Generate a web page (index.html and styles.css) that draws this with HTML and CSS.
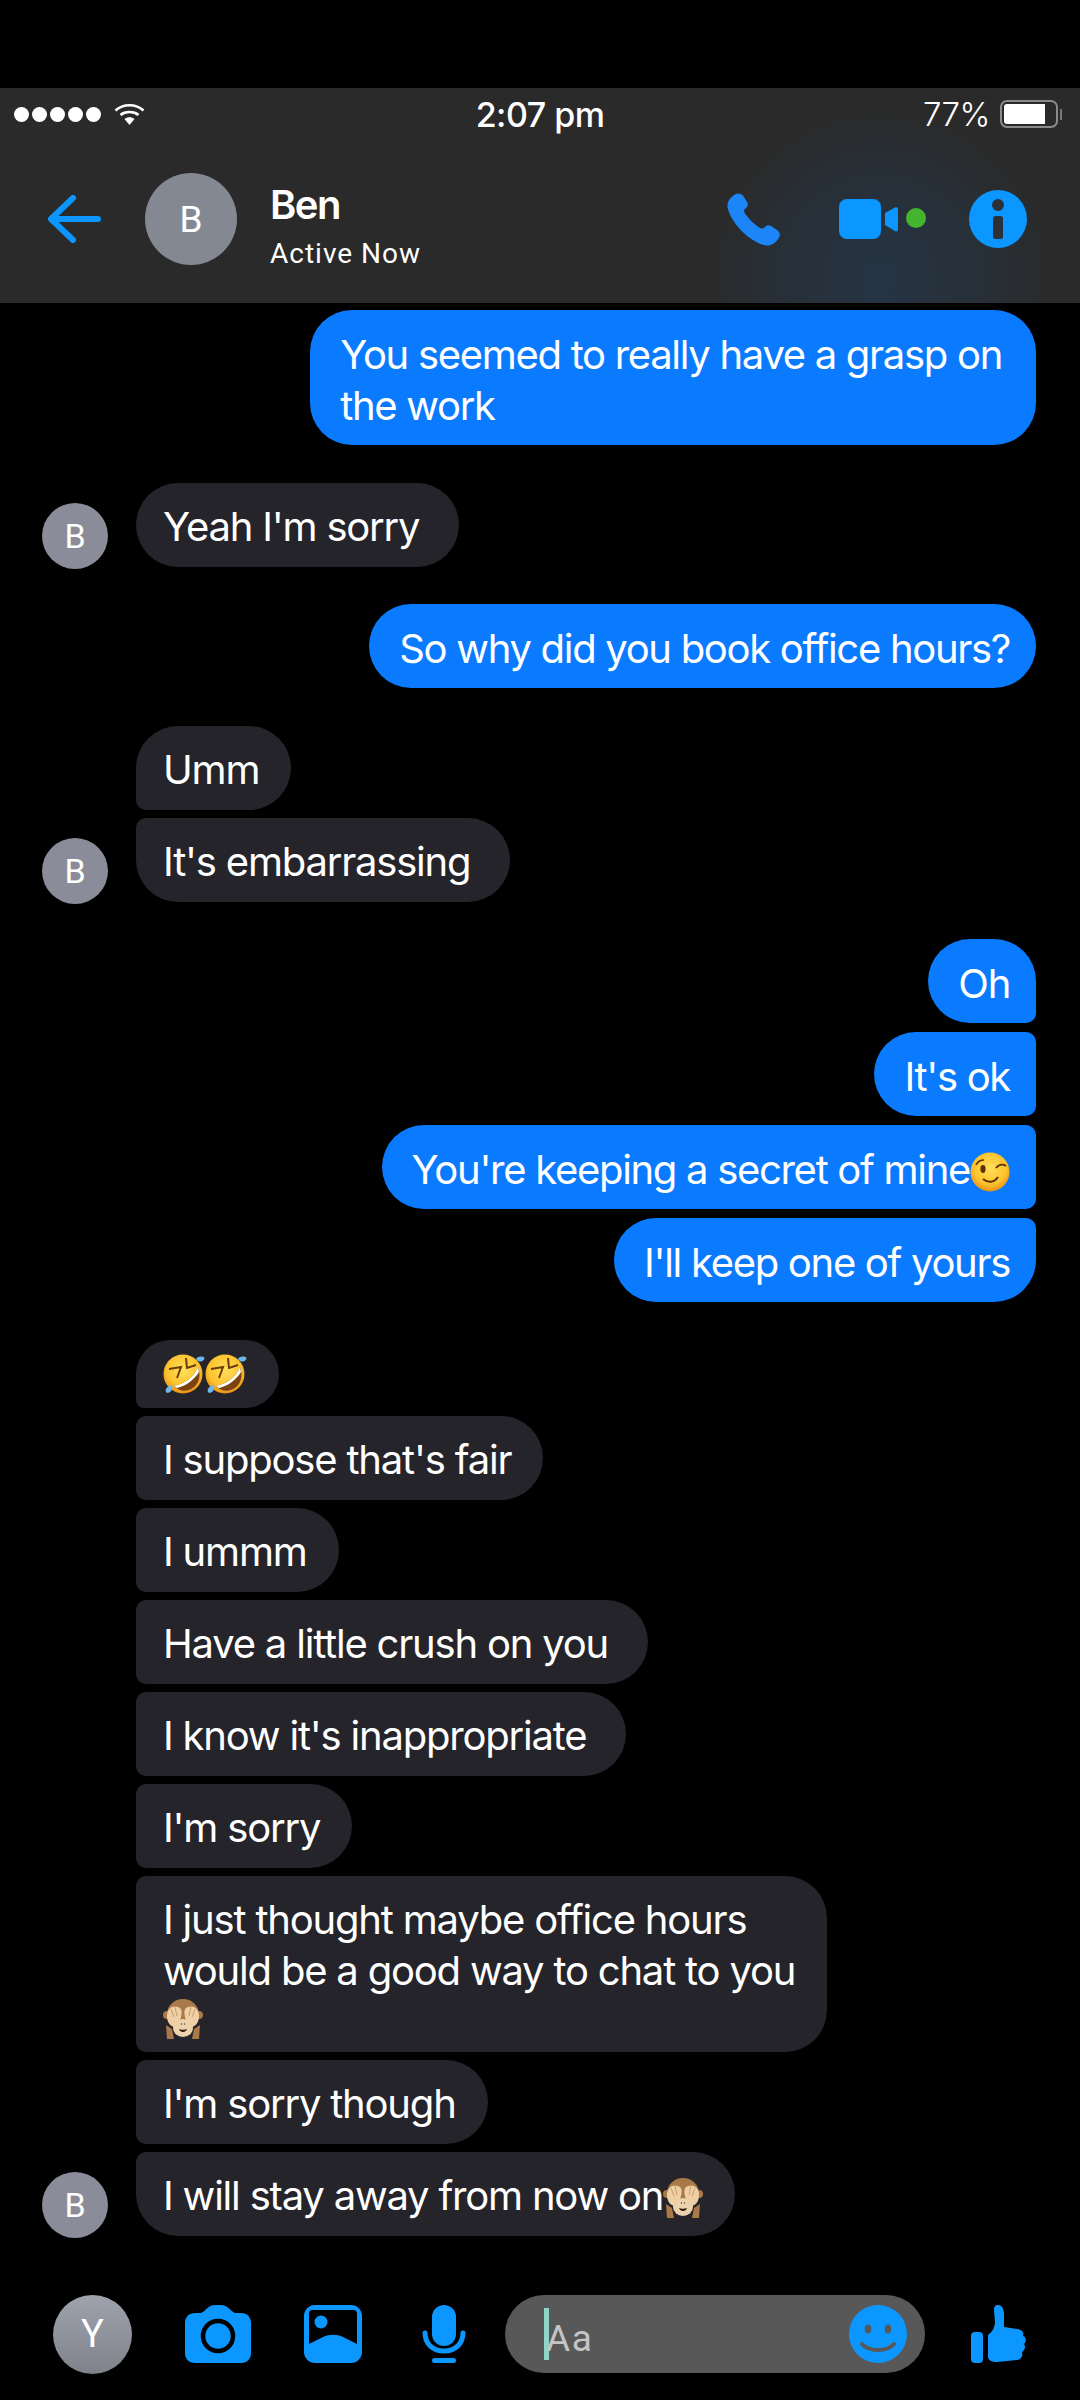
FILE: index.html
```html
<!DOCTYPE html>
<html lang="en">
<head>
    <meta charset="UTF-8">
    <meta name="viewport" content="width=device-width, initial-scale=1.0">
    <title>Ben</title>
    <link rel="stylesheet" href="styles.css">
</head>
<body>
    <!-- Emoji drawings, used from the messages below -->
    <svg class="defs" width="0" height="0">
        <defs>
            <radialGradient id="face" cx="50%" cy="40%" r="60%">
                <stop offset="0" stop-color="#ffe05a"/>
                <stop offset="0.7" stop-color="#fcc22d"/>
                <stop offset="1" stop-color="#e8901a"/>
            </radialGradient>
            <symbol id="rofl" viewBox="0 0 42 42">
                <circle cx="20" cy="21" r="19.5" fill="url(#face)"/>
                <path d="M6 16 L18 14 L14 25" fill="none" stroke="#6b3d0c" stroke-width="2"/>
                <path d="M23 5 L24 15 L33 12" fill="none" stroke="#6b3d0c" stroke-width="2"/>
                <path d="M11 33 C22 31 31 24 35 14 C39 24 35 34 26 37 C20 39 15 37 11 33 Z" fill="#7a430f"/>
                <path d="M11 33 C22 31 31 24 35 14 L36 19 C31 27 23 33 14 35 Z" fill="#fff"/>
                <path d="M33 6 C35 3 40 3 41.500 5 C41 9 36 10 33 6 Z" fill="#6fb6ea"/>
                <path d="M9 32 C10 36 8 40 4 40 C1 38 3 33 9 32 Z" fill="#6fb6ea"/>
            </symbol>
            <symbol id="wink" viewBox="0 0 40 40">
                <circle cx="20" cy="20" r="19.5" fill="url(#face)"/>
                <path d="M6 13 C8 9 11 8 14 8" fill="none" stroke="#5b3208" stroke-width="1.600"/>
                <path d="M26 16 C29 12 33 12 36 14" fill="none" stroke="#5b3208" stroke-width="2"/>
                <ellipse cx="13" cy="17" rx="2.600" ry="4" fill="#5b3208"/>
                <path d="M13 27 C18 31 24 31 28 25" fill="none" stroke="#5b3208" stroke-width="2"/>
            </symbol>
            <symbol id="monkey" viewBox="0 0 40 40">
                <circle cx="4" cy="16" r="4" fill="#a9794a"/>
                <circle cx="36" cy="16" r="4" fill="#a9794a"/>
                <ellipse cx="20" cy="15" rx="16" ry="15" fill="#a9794a"/>
                <ellipse cx="20" cy="29" rx="10" ry="9" fill="#ecd3ae"/>
                <path d="M4 40 L3 26 L9 30 L11 40 Z" fill="#a9794a"/>
                <path d="M36 40 L37 26 L31 30 L29 40 Z" fill="#a9794a"/>
                <path d="M4 17 C4 8 12 5 18 10 C20 15 17 24 12 28 C8 28 4 24 4 17 Z" fill="#efcfa5"/>
                <path d="M36 17 C36 8 28 5 22 10 C20 15 23 24 28 28 C32 28 36 24 36 17 Z" fill="#efcfa5"/>
                <path d="M8 10 L11 18 M12 8 L14 17 M32 10 L29 18 M28 8 L26 17" stroke="#c99d70" stroke-width="1"/>
                <circle cx="18.500" cy="25" r="0.700" fill="#5b3a1c"/>
                <circle cx="21.500" cy="25" r="0.700" fill="#5b3a1c"/>
                <path d="M16 30 C18 31 22 31 24 30 C23 34 17 34 16 30 Z" fill="#2e1a0a"/>
            </symbol>
        </defs>
    </svg>

    <div class="phone">
        <header class="topbar">
            <div class="status">
                <div class="signal">
                    <span></span><span></span><span></span><span></span><span></span>
                    <svg class="wifi" viewBox="0 0 31 22">
                        <path d="M1.500 7.500 C9 0.500 22 0.500 29.500 7.500" fill="none" stroke="#fff" stroke-width="2.600"/>
                        <path d="M6.500 12 C11 8 20 8 24.500 12" fill="none" stroke="#fff" stroke-width="2.600"/>
                        <path d="M10.500 16 L15.500 22 L20.500 16 C17.500 13.500 13.500 13.500 10.500 16 Z" fill="#fff"/>
                    </svg>
                </div>
                <div class="clock">2:07 pm</div>
                <div class="power">
                    <span>77%</span>
                    <div class="battery"><div class="battery-fill"></div></div>
                    <div class="battery-tip"></div>
                </div>
            </div>
            <div class="nav">
                <svg class="back" viewBox="0 0 53 48">
                    <path d="M25 3 L3 24 L25 45 M3 24 L50 24" fill="none" stroke="#0b97ff" stroke-width="6" stroke-linecap="round" stroke-linejoin="round"/>
                </svg>
                <div class="avatar avatar-big">B</div>
                <div class="who">
                    <div class="name">Ben</div>
                    <div class="active">Active Now</div>
                </div>
                <svg class="phone-icon" viewBox="0 0 53 53">
                    <path d="M9 1 C12 -0.500 15 1 17 4 L20 9 C21.500 11.500 21 13 19 15 C17 16.500 16.500 18 18 20.500 C21 25 27 31 32 34.500 C34.500 36 36 36 38 34 C40 32 41.500 31.500 44 33 L50 37 C53 39 53.500 42 52 44.500 C49 50 44 53 39 52.500 C24 50 4 31 0.500 14 C0 9 3 4 9 1 Z" fill="#1c86f8"/>
                </svg>
                <svg class="video-icon" viewBox="0 0 88 40">
                    <rect x="0" y="0" width="42" height="40" rx="8" fill="#0b97ff"/>
                    <path d="M46 14 L56 8.500 C58 8 59 9 59 10 L59 30 C59 32 58 33 56 32 L46 26 Z" fill="#0b97ff"/>
                    <circle cx="77" cy="19" r="10" fill="#45b52f"/>
                </svg>
                <svg class="info-icon" viewBox="0 0 58 58">
                    <circle cx="29" cy="29" r="29" fill="#0b97ff"/>
                    <circle cx="29" cy="15" r="6" fill="#2a3038"/>
                    <rect x="24" y="26" width="10" height="23" rx="2.500" fill="#2a3038"/>
                </svg>
            </div>
        </header>

        <!-- Messages -->
        <main class="messages">
            <div class="group sent">
                <div class="bubble wrapped">You seemed to really have a grasp on<br>the work</div>
            </div>

            <div class="group received">
                <div class="avatar">B</div>
                <div class="stack">
                    <div class="bubble wide">Yeah I'm sorry</div>
                </div>
            </div>

            <div class="group sent">
                <div class="bubble">So why did you book office hours?</div>
            </div>

            <div class="group received">
                <div class="avatar">B</div>
                <div class="stack">
                    <div class="bubble">Umm</div>
                    <div class="bubble wide">It's embarrassing</div>
                </div>
            </div>

            <div class="group sent">
                <div class="bubble">Oh</div>
                <div class="bubble">It's ok</div>
                <div class="bubble">You're keeping a secret of mine<svg class="emoji"><use href="#wink"/></svg></div>
                <div class="bubble">I'll keep one of yours</div>
            </div>

            <div class="group received">
                <div class="avatar">B</div>
                <div class="stack">
                    <div class="bubble bubble-emoji"><svg class="emoji"><use href="#rofl"/></svg><svg class="emoji"><use href="#rofl"/></svg></div>
                    <div class="bubble">I suppose that's fair</div>
                    <div class="bubble">I ummm</div>
                    <div class="bubble wide">Have a little crush on you</div>
                    <div class="bubble wide">I know it's inappropriate</div>
                    <div class="bubble">I'm sorry</div>
                    <div class="bubble">I just thought maybe office hours<br>would be a good way to chat to you<span class="emoji-line"><svg class="emoji"><use href="#monkey"/></svg></span></div>
                    <div class="bubble">I'm sorry though</div>
                    <div class="bubble">I will stay away from now on<svg class="emoji"><use href="#monkey"/></svg></div>
                </div>
            </div>
        </main>

        <!-- Composer -->
        <footer class="composer">
            <div class="avatar avatar-me">Y</div>
            <svg class="camera" viewBox="0 0 66 58">
                <path d="M10 8 L16 8 C21 6 23 0 30 0 L36 0 C43 0 45 6 50 8 L56 8 C62 8 66 12 66 18 L66 48 C66 54 62 58 56 58 L10 58 C4 58 0 54 0 48 L0 18 C0 12 4 8 10 8 Z" fill="#0b97ff"/>
                <circle cx="33" cy="31" r="15" fill="#0b97ff" stroke="#000" stroke-width="4.500"/>
            </svg>
            <svg class="photo" viewBox="0 0 58 58">
                <rect width="58" height="58" rx="11" fill="#0b97ff"/>
                <path d="M9 5 L49 5 C52 5 53 6 53 9 L53 39 L39 32 C33 29 25 29 19 32 L5 39 L5 9 C5 6 6 5 9 5 Z" fill="#000"/>
                <circle cx="17" cy="17" r="6.500" fill="#0b97ff"/>
            </svg>
            <svg class="mic" viewBox="0 0 44 58">
                <rect x="10" y="0" width="24" height="41" rx="12" fill="#0b97ff"/>
                <path d="M3 28 C3 39 11 46 22 46 C33 46 41 39 41 28" fill="none" stroke="#0b97ff" stroke-width="5" stroke-linecap="round"/>
                <rect x="10" y="53" width="24" height="5" rx="2.500" fill="#0b97ff"/>
            </svg>
            <div class="input">
                <span class="caret"></span>
                <span class="placeholder">Aa</span>
                <svg class="smile" viewBox="0 0 58 58">
                    <ellipse cx="29" cy="29" rx="29" ry="29" fill="#0b97ff"/>
                    <ellipse cx="19" cy="24" rx="3.300" ry="4.500" fill="#585858"/>
                    <ellipse cx="39" cy="24" rx="3.300" ry="4.500" fill="#585858"/>
                    <path d="M13 39 C20 47 38 47 45 39" fill="none" stroke="#585858" stroke-width="4" stroke-linecap="round"/>
                </svg>
            </div>
            <svg class="thumb" viewBox="0 0 56 58">
                <rect x="0" y="27" width="12" height="31" rx="4" fill="#0b97ff"/>
                <path d="M27 0 C31 0 33 4 33 10 L33 22 L46 24 C52 25 53 28 52 31 C55 32 56 36 53 39 C55 41 54 45 51 47 C52 50 51 54 46 55 L26 57 C21 57 17 55 17 52 L17 30 C21 27 23 24 24 18 L23 5 C23 2 24 0 27 0 Z" fill="#0b97ff"/>
            </svg>
        </footer>
    </div>
</body>
</html>
```

FILE: styles.css
```css
body {
    margin: 0;
    padding: 0;
    background: #000;
    color: #fff;
    font-family: Inter, "Liberation Sans", sans-serif;
}

.defs {
    display: block;
    height: 0;
}

.phone {
    height: 2400px;
    padding-top: 88px;
    box-sizing: border-box;
    display: flex;
    flex-direction: column;
    overflow: hidden;
}

/* Top bar */
.topbar {
    height: 215px;
    flex: none;
    background: radial-gradient(ellipse 170px 170px at 880px 190px, #263444 0%, #273039 55%, rgba(42, 42, 42, 0) 100%), #2a2a2a;
}

.status {
    height: 52px;
    padding: 0 18px 0 14px;
    display: grid;
    grid-template-columns: 1fr auto 1fr;
    align-items: center;
}

.signal {
    display: flex;
    align-items: center;
    gap: 3px;
}

.signal span {
    width: 15px;
    height: 15px;
    background: #fff;
    border-radius: 50%;
}

.wifi {
    width: 31px;
    height: 22px;
    margin-left: 10px;
}

.clock {
    margin-left: 4px;
    font-size: 34px;
    font-weight: 500;
    letter-spacing: -0.5px;
}

.power {
    display: flex;
    align-items: center;
    justify-content: flex-end;
    font-size: 33px;
    font-weight: 300;
    letter-spacing: -0.5px;
}

.power span {
    margin-right: 10px;
}

.battery {
    width: 58px;
    height: 28px;
    box-sizing: border-box;
    border: 2px solid #8a8a8a;
    border-radius: 7px;
    padding: 2px;
}

.battery-fill {
    width: 41px;
    height: 100%;
    background: #fff;
    border-radius: 3px 0 0 3px;
}

.battery-tip {
    width: 2px;
    height: 11px;
    margin-left: 2px;
    background: #777;
}

.nav {
    height: 158px;
    padding-left: 48px;
    display: flex;
    align-items: center;
}

.back {
    width: 53px;
    height: 48px;
}

.avatar {
    width: 66px;
    height: 66px;
    flex: none;
    border-radius: 50%;
    background: #8a8d99;
    font-family: Roboto, sans-serif;
    font-size: 34px;
    display: flex;
    align-items: center;
    justify-content: center;
}

.avatar-big {
    width: 92px;
    height: 92px;
    margin-left: 44px;
    font-size: 37px;
    background: #848892;
}

.who {
    margin-left: 33px;
    width: 457px;
    padding-top: 12px;
}

.name {
    font-size: 40px;
    font-weight: 600;
    letter-spacing: -1.500px;
    line-height: 48px;
}

.active {
    font-family: Roboto, sans-serif;
    font-size: 28px;
    letter-spacing: 1px;
    margin-top: 8px;
}

.phone-icon {
    width: 53px;
    height: 53px;
}

.video-icon {
    width: 88px;
    height: 40px;
    margin-left: 59px;
}

.info-icon {
    width: 58px;
    height: 58px;
    margin-left: 42px;
}

/* Messages */
.messages {
    flex: 1;
    padding: 7px 44px 0 42px;
    display: flex;
    flex-direction: column;
    gap: 37.500px;
}

.group {
    display: flex;
}

.group.sent {
    flex-direction: column;
    align-items: flex-end;
    gap: 9px;
}

.group.received {
    align-items: flex-end;
    gap: 28px;
}

.group.received .avatar {
    margin-bottom: -2px;
}

.stack {
    display: flex;
    flex-direction: column;
    align-items: flex-start;
    gap: 8px;
}

.bubble {
    padding: 18.500px 26px 14.500px 30px;
    font-size: 40px;
    line-height: 51px;
    letter-spacing: -1.200px;
    white-space: nowrap;
}

.bubble.wrapped {
    padding-right: 34px;
}

.sent .bubble {
    background: #0a7aff;
    letter-spacing: -1.300px;
    border-radius: 42px 10px 10px 42px;
}

.sent .bubble:first-child {
    border-top-right-radius: 42px;
}

.sent .bubble:last-child {
    border-bottom-right-radius: 42px;
}

.received .bubble {
    background: #25242b;
    padding-left: 27px;
    padding-right: 32px;
    border-radius: 10px 42px 42px 10px;
}

.received .bubble.wide {
    padding-right: 40px;
}

.received .bubble:first-child {
    border-top-left-radius: 42px;
}

.received .bubble:last-child {
    border-bottom-left-radius: 42px;
}

.bubble-emoji {
    line-height: 35px;
    height: 35px;
}

.emoji {
    width: 40px;
    height: 40px;
    vertical-align: -8px;
}

.bubble-emoji .emoji {
    width: 42px;
    height: 42px;
    vertical-align: top;
    margin-top: -5px;
}

.emoji-line {
    display: block;
    height: 41px;
    line-height: 41px;
}

/* Composer */
.composer {
    height: 104px;
    margin-bottom: 14px;
    flex: none;
    padding-left: 53px;
    display: flex;
    align-items: center;
}

.avatar-me {
    width: 79px;
    height: 79px;
    font-size: 38px;
    background: linear-gradient(#9fa3ad, #7f828b);
}

.camera {
    width: 66px;
    height: 58px;
    margin-left: 53px;
}

.photo {
    width: 58px;
    height: 58px;
    margin-left: 53px;
}

.mic {
    width: 44px;
    height: 58px;
    margin-left: 60px;
}

.input {
    width: 420px;
    height: 78px;
    margin-left: 39px;
    box-sizing: border-box;
    padding: 0 18px 0 39px;
    background: #585858;
    border-radius: 39px;
    display: flex;
    align-items: center;
}

.caret {
    width: 5px;
    height: 52px;
    background: #8fd6c8;
}

.placeholder {
    flex: 1;
    margin-left: -3px;
    font-family: Roboto, sans-serif;
    font-size: 37px;
    letter-spacing: 1.500px;
    color: #c4c4c4;
    padding-top: 8px;
}

.smile {
    width: 58px;
    height: 58px;
}

.thumb {
    width: 56px;
    height: 58px;
    margin-left: 46px;
}
```
